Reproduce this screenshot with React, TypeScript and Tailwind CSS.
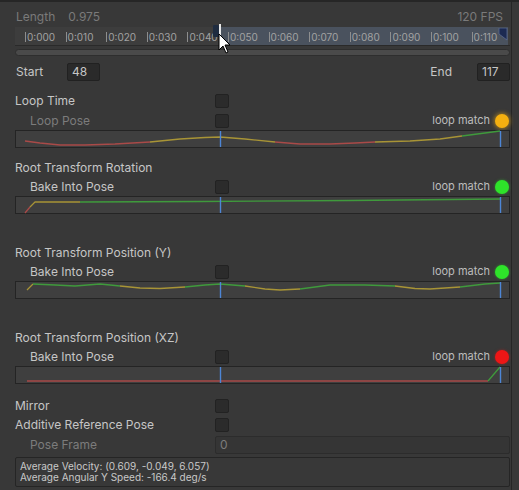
import React from 'react'

type Seg = { color: string; pts: [number, number][] }

const RED = '#a94a48'
const YEL = '#a89436'
const GRN = '#3f9a3c'

// curve boxes start at x=15; points are page coords, shifted in render
const loopCurve: Seg[] = [
  { color: RED, pts: [[25, 141], [40, 143], [60, 145], [85, 145], [115, 144], [150, 142]] },
  { color: YEL, pts: [[150, 142], [180, 139], [205, 137.5], [220, 137], [245, 139], [275, 142]] },
  { color: RED, pts: [[275, 142], [300, 144], [330, 144], [355, 143], [375, 142]] },
  { color: YEL, pts: [[375, 142], [410, 141], [440, 139], [462, 136]] },
  { color: GRN, pts: [[462, 136], [485, 133], [500, 131]] },
]

const rotCurve: Seg[] = [
  { color: RED, pts: [[25, 213], [30, 207]] },
  { color: YEL, pts: [[30, 207], [35, 202], [80, 202]] },
  { color: GRN, pts: [[80, 202], [200, 201.5], [350, 200.5], [500, 199]] },
]

const posYCurve: Seg[] = [
  { color: YEL, pts: [[27, 290], [33, 284]] },
  { color: GRN, pts: [[33, 284], [55, 285], [75, 286], [100, 284], [120, 286]] },
  { color: YEL, pts: [[120, 286], [140, 288], [160, 288.5], [185, 287]] },
  { color: GRN, pts: [[185, 287], [205, 285], [220, 284], [245, 286]] },
  { color: YEL, pts: [[245, 286], [265, 289], [280, 290], [300, 289]] },
  { color: GRN, pts: [[300, 289], [330, 285], [365, 285], [395, 286]] },
  { color: YEL, pts: [[395, 286], [415, 288.5], [430, 289], [460, 287]] },
  { color: GRN, pts: [[460, 287], [485, 284], [500, 283]] },
]

const posXZCurve: Seg[] = [
  { color: RED, pts: [[27, 381], [488, 381]] },
  { color: GRN, pts: [[488, 381], [500, 367]] },
]

const ticks = ['0:000', '0:010', '0:020', '0:030', '0:040', '0:050', '0:060', '0:070', '0:080', '0:090', '0:100', '0:110']

function Checkbox() {
  return <div className="w-[14px] h-[14px] rounded-[2px] bg-[#2b2b2b] border border-[#222]" />
}

function Row({ label, dim, indent, children }: { label: string; dim?: boolean; indent?: boolean; children?: React.ReactNode }) {
  return (
    <div className="flex items-center h-[19px]">
      <div className={`w-[200px] shrink-0 ${indent ? 'pl-[15px]' : ''} ${dim ? 'text-[#7c7c7c]' : 'text-[#c6c6c6]'}`}>{label}</div>
      {children}
    </div>
  )
}

function LoopRow({ label, dot, dim }: { label: string; dot: 'orange' | 'green' | 'red'; dim?: boolean }) {
  const dotCls =
    dot === 'orange'
      ? 'bg-[#f4b010] shadow-[0_0_4px_1px_rgba(244,176,16,0.55)]'
      : dot === 'green'
        ? 'bg-[#2ee32a] shadow-[0_0_3px_0px_rgba(46,227,42,0.5)]'
        : 'bg-[#ec1616] shadow-[0_0_3px_0px_rgba(236,22,22,0.5)]'
  return (
    <div className="flex items-center h-[19px]">
      <div className={`w-[200px] shrink-0 pl-[15px] ${dim ? 'text-[#7c7c7c]' : 'text-[#c6c6c6]'}`}>{label}</div>
      <Checkbox />
      <div className="flex-1" />
      <span className="text-[11px] text-[#bdbdbd] mr-[5px]">loop match</span>
      <div className={`w-[14px] h-[14px] rounded-full ${dotCls} mr-[1px]`} />
    </div>
  )
}

function Curve({ segs, top }: { segs: Seg[]; top: number }) {
  return (
    <div className="relative h-[18px] border border-[#242424] bg-[#3f3f3f]">
      <svg className="absolute left-[-1px] top-[-1px]" width="495" height="18" viewBox="0 0 495 18">
        {segs.map((s, i) => (
          <polyline
            key={i}
            fill="none"
            stroke={s.color}
            strokeWidth="1.3"
            strokeLinejoin="round"
            points={s.pts.map(([x, y]) => `${x - 15},${y - top}`).join(' ')}
          />
        ))}
        <line x1="205.5" y1="1" x2="205.5" y2="17" stroke="#4d86d6" strokeWidth="1.4" />
        <line x1="485.5" y1="1" x2="485.5" y2="17" stroke="#4d86d6" strokeWidth="1.4" />
      </svg>
    </div>
  )
}

export default function App() {
  return (
    <div className="w-[519px] h-[490px] bg-[#383838] border-t-2 border-[#262626] flex overflow-hidden text-[12px] leading-none" style={{ fontFamily: 'Inter, "Noto Sans", sans-serif' }}>
      <div className="w-[511px] shrink-0 pl-[15px] pr-[1px] relative">
        {/* Length / FPS */}
        <div className="flex items-center h-[21px] mt-[4px] px-[1px] text-[#7a7a7a]">
          <span>Length</span>
          <span className="ml-[13px]">0.975</span>
          <div className="flex-1" />
          <span className="mr-[6px]">120 FPS</span>
        </div>

        {/* Ruler */}
        <div className="relative h-[19px] bg-[#3d3d3d] border-b border-[#2a2a2a] overflow-visible">
          <div className="absolute left-[205px] right-[2px] top-0 bottom-0 bg-[#4a525e]" />
          {ticks.map((t, i) => (
            <div key={t} className="absolute top-[5px] flex items-end text-[10px] text-[#a2a2a2]" style={{ left: 10 + i * 40.6 }}>
              <div className="w-[1px] h-[10px] bg-[#8e8e8e] mr-[1px]" />
              <span className="leading-[10px]">{t}</span>
            </div>
          ))}
          <div className="absolute left-[198px] top-[-2px] w-[6px] h-[12px] bg-[#1f2c40] rounded-[1px]" />
          <div className="absolute left-[204px] top-[-3px] w-[2px] h-[22px] bg-[#e8e8e8]" />
          <svg className="absolute left-[483px] top-[1px]" width="10" height="13" viewBox="0 0 10 13">
            <path d="M1 0 H9 V12 L1 6 Z" fill="#1c2a52" stroke="#5a6a90" strokeWidth="0.8" />
          </svg>
        </div>

        {/* Scrollbar */}
        <div className="h-[7px] mt-[3px] rounded-full bg-[#4a4a4a] border border-[#2e2e2e]" />

        {/* Start / End */}
        <div className="flex items-center h-[19px] mt-[6px] text-[#c6c6c6]">
          <span className="ml-[1px] w-[51px]">Start</span>
          <div className="w-[33px] h-[18px] bg-[#2a2a2a] border border-[#212121] rounded-[2px] flex items-center pl-[4px]">48</div>
          <div className="flex-1" />
          <span className="mr-[25px]">End</span>
          <div className="w-[33px] h-[18px] bg-[#2a2a2a] border border-[#212121] rounded-[2px] flex items-center pl-[4px]">117</div>
        </div>

        {/* Loop time */}
        <div className="mt-[10px]">
          <Row label="Loop Time"><Checkbox /></Row>
          <div className="mt-[1px]"><LoopRow label="Loop Pose" dot="orange" dim /></div>
          <Curve segs={loopCurve} top={130} />
        </div>

        {/* Rotation */}
        <div className="mt-[10px]">
          <Row label="Root Transform Rotation" />
          <LoopRow label="Bake Into Pose" dot="green" />
          <Curve segs={rotCurve} top={196} />
        </div>

        {/* Position Y */}
        <div className="mt-[29px]">
          <Row label="Root Transform Position (Y)" />
          <LoopRow label="Bake Into Pose" dot="green" />
          <Curve segs={posYCurve} top={281} />
        </div>

        {/* Position XZ */}
        <div className="mt-[29px]">
          <Row label="Root Transform Position (XZ)" />
          <LoopRow label="Bake Into Pose" dot="red" />
          <Curve segs={posXZCurve} top={366} />
        </div>

        {/* Mirror etc */}
        <div className="mt-[12px]">
          <Row label="Mirror"><Checkbox /></Row>
          <Row label="Additive Reference Pose"><Checkbox /></Row>
          <div className="flex items-center h-[19px] mt-[1px]">
            <div className="w-[200px] shrink-0 pl-[15px] text-[#7c7c7c]">Pose Frame</div>
            <div className="flex-1 h-[18px] bg-[#353535] border border-[#2c2c2c] rounded-[2px] flex items-center pl-[4px] text-[#7c7c7c]">0</div>
          </div>
        </div>

        {/* Info box */}
        <div className="mt-[3px] h-[30px] border border-[#252525] bg-[#383838] rounded-[2px] px-[4px] flex flex-col justify-center text-[10px] leading-[11px] text-[#c8c8c8]">
          <div>Average Velocity: (0.609, -0.049, 6.057)</div>
          <div>Average Angular Y Speed: -166.4 deg/s</div>
        </div>

        {/* mouse cursor */}
        <svg className="absolute left-[218px] top-[31px]" width="14" height="22" viewBox="0 0 14 22">
          <path d="M1 1 L1 17 L5 13 L8 20 L10 19 L7 12 L12 12 Z" fill="#ffffff" stroke="#000000" strokeWidth="1" strokeLinejoin="round" />
        </svg>
      </div>
      <div className="w-[1px] bg-[#262626]" />
      <div className="flex-1 bg-[#383838]" />
    </div>
  )
}
